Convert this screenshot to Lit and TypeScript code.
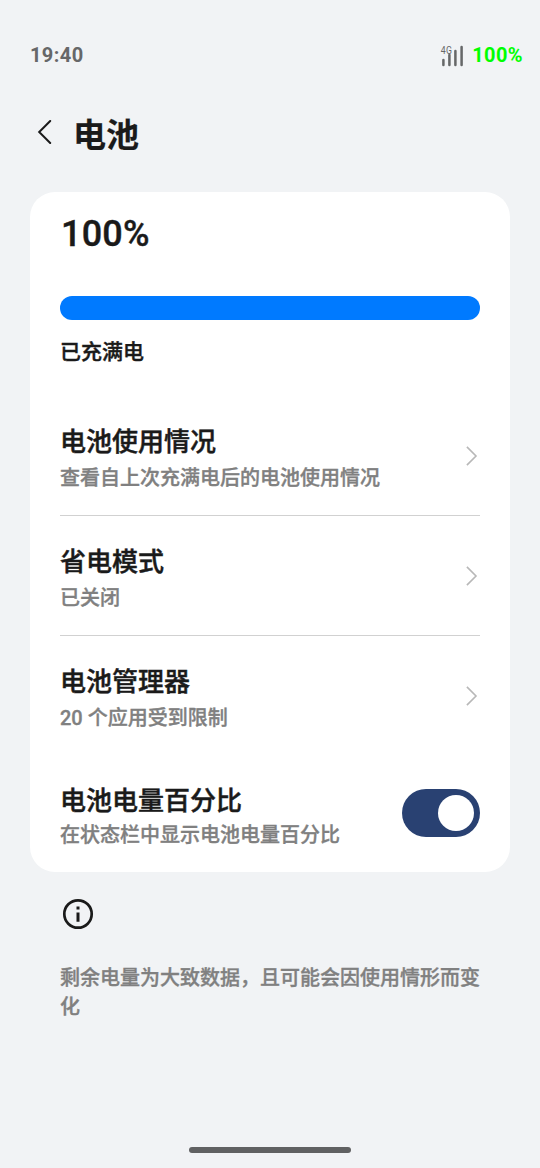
import { LitElement, html, css } from "lit";
import { customElement } from "lit/decorators.js";

interface Row { title: string; sub: string }

const rows: Row[] = [
  { title: "电池使用情况", sub: "查看自上次充满电后的电池使用情况" },
  { title: "省电模式", sub: "已关闭" },
  { title: "电池管理器", sub: "20 个应用受到限制" },
];

@customElement("app-root")
export class AppRoot extends LitElement {
  static styles = css`
    :host { display: flex; flex-direction: column; box-sizing: border-box; width: 540px; height: 1168px; background: #f1f3f5; color: #1a1a1a; font-family: Roboto, "Noto Sans CJK SC", sans-serif; font-weight: 500; overflow: hidden; }
    * { box-sizing: border-box; }
    svg { display: block; }
    .status { display: flex; align-items: center; justify-content: space-between; height: 30px; margin-top: 40px; padding: 0 17px 0 30px; font-size: 20px; line-height: 30px; font-weight: 700; color: #666768; letter-spacing: 0.4px; }
    .right { display: flex; align-items: center; gap: 8px; }
    .full { color: #00ff00; }
    .head { display: flex; align-items: center; height: 60px; margin-top: 34px; padding: 0 0 0 37px; }
    .back { margin-bottom: 4px; }
    h1 { margin: 4px 0 0 21px; font-size: 33px; line-height: 48px; font-weight: 700; -webkit-text-stroke: 0.2px currentColor; }
    .card { height: 680px; margin: 28px 30px 0; padding: 0 30px; background: #fff; border-radius: 25px; }
    .pct { height: 104px; padding: 20px 0 0 1px; font-size: 36px; line-height: 44px; letter-spacing: 0.2px; -webkit-text-stroke: 0.4px currentColor; }
    .bar { height: 24px; border-radius: 12px; background: #007aff; }
    .state { height: 76px; padding-top: 17px; font-size: 21px; line-height: 30px; -webkit-text-stroke: 0.4px currentColor; }
    .row { display: flex; align-items: center; justify-content: space-between; height: 120px; padding-right: 2px; border-bottom: 1px solid #d1d1d1; }
    .row.plain { border-color: transparent; }
    .row.last { align-items: flex-start; height: 116px; padding: 26px 0 0; border: 0; }
    .text { padding-top: 5px; }
    .last .text { padding: 0; }
    .title { font-size: 26px; line-height: 38px; -webkit-text-stroke: 0.45px currentColor; }
    .sub { margin-top: 2px; font-size: 20px; line-height: 30px; color: #808080; -webkit-text-stroke: 0.35px currentColor; }
    .last .sub { margin: 0; }
    .toggle { display: flex; justify-content: flex-end; width: 78px; height: 48px; margin-top: 7px; padding: 6px; border-radius: 24px; background: #294172; }
    .knob { width: 36px; height: 36px; border-radius: 50%; background: #fff; }
    .info { margin: 26px 0 0 62px; }
    .note { margin: 34px 60px 0; font-size: 20px; line-height: 29px; color: #808080; -webkit-text-stroke: 0.35px currentColor; }
    .home { width: 162px; height: 6px; margin: auto auto 15px; border-radius: 3px; background: #606162; }
  `;

  render() {
    return html`
      <div class="status">
        <span>19:40</span>
        <div class="right">
          <svg width="24" height="24" viewBox="0 0 24 24"><text x="0.7" y="11.3" font-family="Roboto" font-size="10.5" font-weight="400" textLength="11.5" lengthAdjust="spacingAndGlyphs" fill="#666768">4G</text><path d="M3.4 17v5M9.4 12v10M15.4 8v14M21.6 4v18" stroke="#666768" stroke-width="2.5" stroke-linecap="round"/></svg>
          <span class="full">100%</span>
        </div>
      </div>
      <div class="head">
        <svg class="back" width="15" height="24" viewBox="0 0 15 24" fill="none" stroke="#1a1a1a" stroke-width="2" stroke-linecap="round"><path d="M13.2 1 2.2 12l11 11"/></svg>
        <h1>电池</h1>
      </div>
      <div class="card">
        <div class="pct">100%</div>
        <div class="bar"></div>
        <div class="state">已充满电</div>
        ${rows.map((r, i) => html`
          <div class="row ${i === 2 ? "plain" : ""}">
            <div class="text"><div class="title">${r.title}</div><div class="sub">${r.sub}</div></div>
            <svg width="12" height="20" viewBox="0 0 12 20" fill="none" stroke="#b8b8b8" stroke-width="1.6"><path d="M.9 .9 10 10 .9 19.1"/></svg>
          </div>`)}
        <div class="row last">
          <div class="text"><div class="title">电池电量百分比</div><div class="sub">在状态栏中显示电池电量百分比</div></div>
          <div class="toggle"><div class="knob"></div></div>
        </div>
      </div>
      <svg class="info" width="32" height="32" viewBox="0 0 32 32"><circle cx="16" cy="16" r="13.7" fill="none" stroke="#1a1a1a" stroke-width="2.7"/><path d="M16 14.4v9.4M16 8.4v3" stroke="#1a1a1a" stroke-width="3"/></svg>
      <div class="note">剩余电量为大致数据，且可能会因使用情形而变化</div>
      <div class="home"></div>
    `;
  }
}
